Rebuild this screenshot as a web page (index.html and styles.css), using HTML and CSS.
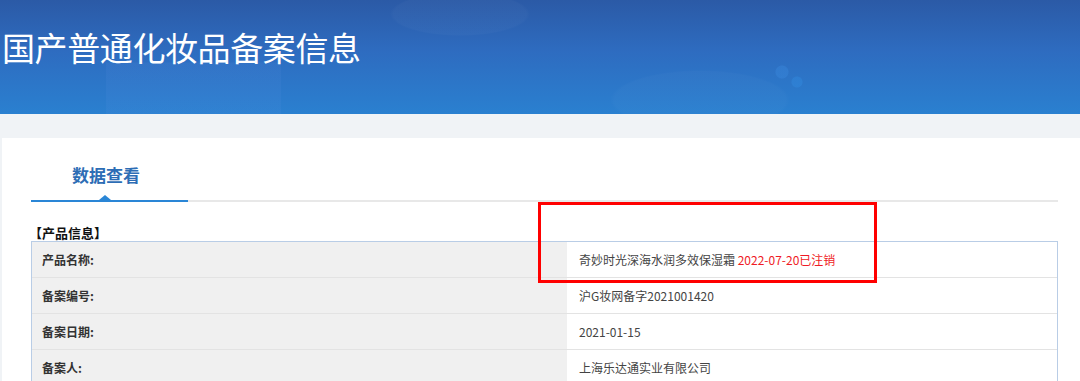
FILE: index.html
```html
<!DOCTYPE html>
<html lang="zh-CN">
<head>
    <meta charset="UTF-8">
    <meta name="viewport" content="width=device-width, initial-scale=1.0">
    <title>国产普通化妆品备案信息</title>
    <link rel="stylesheet" href="styles.css">
</head>
<body>
    <header class="banner">
        <h1 class="banner-title">国产普通化妆品备案信息</h1>
    </header>
    <main class="card">
        <nav class="tabs">
            <a class="tab active" href="#">数据查看</a>
        </nav>
        <h2 class="section-title">【产品信息】</h2>
        <div class="info-table">
            <div class="info-row">
                <div class="info-label">产品名称:</div>
                <div class="info-value">奇妙时光深海水润多效保湿霜 <span class="status-cancelled">2022-07-20已注销</span></div>
            </div>
            <div class="info-row">
                <div class="info-label">备案编号:</div>
                <div class="info-value">沪G妆网备字2021001420</div>
            </div>
            <div class="info-row">
                <div class="info-label">备案日期:</div>
                <div class="info-value">2021-01-15</div>
            </div>
            <div class="info-row">
                <div class="info-label">备案人:</div>
                <div class="info-value">上海乐达通实业有限公司</div>
            </div>
        </div>
        <!-- annotation box drawn over the product name -->
        <div class="highlight-box"></div>
    </main>
</body>
</html>
```

FILE: styles.css
```css
body {
    margin: 0;
    background-color: #f0f3f6;
    font-family: "Noto Sans CJK SC", "Noto Sans", sans-serif;
    color: #333;
}

.banner {
    height: 114px;
    padding: 27px 0 0 2px;
    box-sizing: border-box;
    background:
        radial-gradient(circle at 782px 72px, rgba(60, 140, 225, 0.35) 0 6px, transparent 7px),
        radial-gradient(circle at 797px 82px, rgba(50, 140, 225, 0.4) 0 5px, transparent 6px),
        radial-gradient(ellipse 70px 22px at 460px 14px, rgba(255, 255, 255, 0.025) 0 95%, transparent 100%),
        radial-gradient(ellipse 90px 30px at 700px 100px, rgba(255, 255, 255, 0.02) 0 95%, transparent 100%),
        linear-gradient(180deg, transparent 0 62px, rgba(120, 160, 240, 0.08) 63px),
        linear-gradient(180deg, #2b5aa6 0%, #2e6cc0 45%, #2a80d0 100%);
    background-size: auto, auto, auto, auto, 175px 114px, auto;
    background-position: 0 0, 0 0, 0 0, 0 0, 106px 0, 0 0;
    background-repeat: no-repeat;
}

.banner-title {
    margin: 0;
    font-size: 33px;
    font-weight: normal;
    line-height: 40px;
    color: #fff;
    letter-spacing: -0.4px;
}

.card {
    position: relative;
    margin: 24px 0 0 2px;
    padding: 0 22px 0 29px;
    background-color: #fff;
    min-height: 260px;
}

.tabs {
    display: flex;
    border-bottom: 2px solid #e8e8e8;
}

.tab {
    position: relative;
    width: 157px;
    box-sizing: border-box;
    padding: 24px 0 12px 41px;
    margin-bottom: -2px;
    border-bottom: 2px solid #2a86d6;
    font-size: 17px;
    font-weight: bold;
    line-height: 26px;
    color: #2d6db5;
    text-decoration: none;
}

.tab::after {
    content: "";
    position: absolute;
    left: 68px;
    bottom: 0;
    border-left: 6px solid transparent;
    border-right: 6px solid transparent;
    border-bottom: 5px solid #2a86d6;
}

.section-title {
    margin: 23px 0 0 -2px;
    font-size: 13px;
    font-weight: bold;
    line-height: 16px;
    color: #111;
}

.info-table {
    border: 1px solid #b9cde6;
    border-bottom: none;
}

.info-row {
    display: grid;
    grid-template-columns: 535px 1fr;
    height: 36px;
    box-sizing: border-box;
    border-bottom: 1px solid #e3e3e3;
    font-size: 12px;
}

.info-label {
    display: flex;
    align-items: center;
    padding-left: 10px;
    background-color: #f0f0f0;
    font-weight: bold;
    color: #333;
}

.info-value {
    display: flex;
    align-items: center;
    padding-left: 12px;
    color: #444;
    white-space: pre;
}

.status-cancelled {
    color: #ef1b25;
}

.highlight-box {
    position: absolute;
    left: 536px;
    top: 64px;
    width: 339px;
    height: 81px;
    box-sizing: border-box;
    border: 3px solid #f00;
}
```
